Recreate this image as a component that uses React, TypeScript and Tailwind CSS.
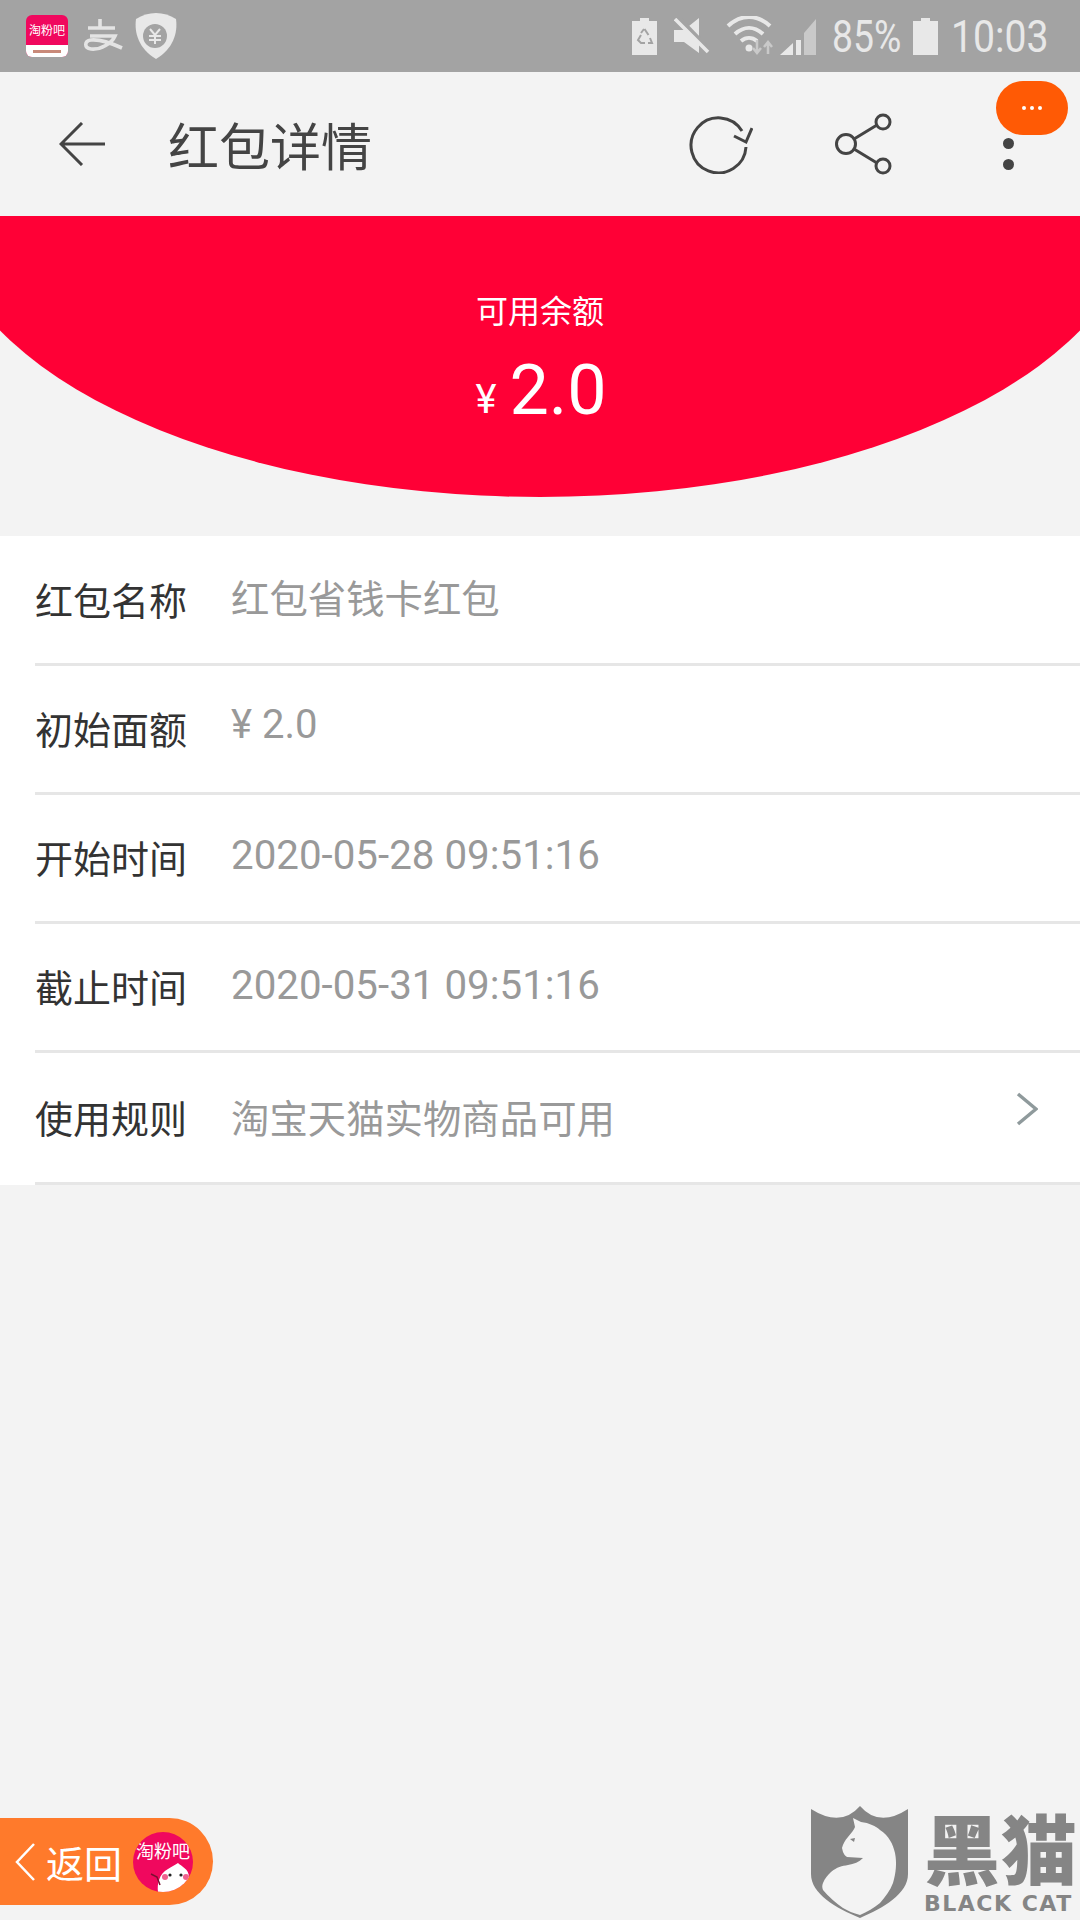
const CJK = "font-['Noto_Sans_CJK_SC','Noto_Sans',sans-serif]";

function StatusBar() {
  return (
    <div className="relative flex h-[72px] items-center justify-between bg-[#a3a3a3] pl-[26px] pr-[33px] text-[#e8e8e8]">
      <div className="flex items-center">
        <div className="flex h-[42px] w-[42px] flex-col overflow-hidden rounded-[6px] bg-[#f0085e]">
          <div className={`flex h-[30px] items-center justify-center whitespace-nowrap text-[12px] leading-none text-white ${CJK}`}>淘粉吧</div>
          <div className="flex h-[12px] items-center justify-center bg-white">
            <div className="h-[3px] w-[28px] bg-[#c98a7a]" />
          </div>
        </div>
        <svg className="ml-[15px]" width="41" height="34" viewBox="0 0 41 34" fill="none" stroke="#e4e4e4" strokeWidth="3.6">
          <path d="M17 0v9M5 9h27M7 17h25C29 24 18 31 8 30 1 29 1 22 8 21c9-1 20 3 31 8" />
        </svg>
        <svg className="ml-[10px]" width="44" height="46" viewBox="0 0 44 46">
          <path d="M22 0c7 0 14 2 20 6 2 14-3 30-20 40C5 36 0 20 2 6 8 2 15 0 22 0z" fill="#e8e8e8" />
          <circle cx="21" cy="23" r="12" fill="#a3a3a3" />
          <path d="M16 16l5 6 5-6M15 23h12M15 27h12M21 22v9" fill="none" stroke="#e8e8e8" strokeWidth="2" />
        </svg>
      </div>
      <div className="flex items-center">
        <svg width="25" height="37" viewBox="0 0 25 37">
          <path d="M8 0h9v3h8v34H0V3h8z" fill="#e8e8e8" />
          <path d="M12.5 11l4 6M9 17l-3 5 3 3h4M16 25h4l-2-5M12 11l-3 4" fill="none" stroke="#a3a3a3" strokeWidth="2" />
        </svg>
        <svg className="ml-[17px]" width="36" height="36" viewBox="0 0 36 36">
          <path d="M0 12h10L25 0v35L10 24H0z" fill="#e8e8e8" />
          <path d="M5 0l31 32" stroke="#a3a3a3" strokeWidth="4" />
          <path d="M1 1l33 33" stroke="#e8e8e8" strokeWidth="3.5" />
        </svg>
        <svg className="ml-[16px]" width="92" height="40" viewBox="0 0 92 40">
          <path d="M2 10c13-12 29-12 42 0M9 18c9-8 19-8 28 0M15 25c5-4 11-4 16 0" fill="none" stroke="#e8e8e8" strokeWidth="4" />
          <circle cx="23" cy="32" r="3.5" fill="#e8e8e8" />
          <path d="M31 24v12M27 32l4 5 4-5" fill="none" stroke="#c9c9c9" strokeWidth="2.5" />
          <path d="M42 38V27M38 31l4-5 4 5" fill="none" stroke="#c9c9c9" strokeWidth="2.5" />
          <path d="M54 39l13-12v12z" fill="#e8e8e8" />
          <path d="M70 24h5v15h-5z" fill="#e8e8e8" />
          <path d="M78 17l12-14v36H78z" fill="#c9c9c9" />
        </svg>
        <span className="ml-[14px] w-[82px] origin-left scale-x-[0.83] whitespace-nowrap text-[45px] leading-none font-['Roboto',sans-serif]">85%</span>
        <svg className="ml-[-1px]" width="25" height="37" viewBox="0 0 25 37">
          <path d="M8 0h9v3h8v34H0V3h8z" fill="#e8e8e8" />
        </svg>
        <span className="ml-[13px] w-[96px] origin-left scale-x-[0.87] whitespace-nowrap text-[45px] leading-none font-['Roboto',sans-serif]">10:03</span>
      </div>
    </div>
  );
}

function Header() {
  return (
    <div className="relative flex h-[144px] items-center bg-[#f3f3f3] pl-[59px] text-[#444444]">
      <svg width="46" height="44" viewBox="0 0 46 44" fill="none" stroke="#444444" strokeWidth="3">
        <path d="M23 1L2 22l21 21M2 22h44" />
      </svg>
      <span className={`ml-[63px] text-[51px] leading-none ${CJK}`}>红包详情</span>
      <svg className="ml-[317px]" width="64" height="60" viewBox="0 0 64 60" fill="none" stroke="#444444" strokeWidth="3">
        <path d="M57 33A27.5 27.5 0 1 1 53 17" />
        <path d="M45 22l12 6 6-14" />
      </svg>
      <svg className="ml-[81px]" width="60" height="62" viewBox="0 0 60 62" fill="none" stroke="#444444" strokeWidth="3">
        <circle cx="12" cy="31" r="9.5" />
        <circle cx="49" cy="9" r="7" />
        <circle cx="49" cy="53" r="7" />
        <path d="M20 26l23-14M20 36l23 14" />
      </svg>
      <div className="ml-[109px] flex flex-col gap-[10px] pt-[20px]">
        <span className="h-[11px] w-[11px] rounded-full bg-[#444444]" />
        <span className="h-[11px] w-[11px] rounded-full bg-[#444444]" />
      </div>
      <div className="absolute left-[996px] top-[9px] flex h-[54px] w-[72px] items-center justify-center gap-[4px] rounded-[27px] bg-[#ff5a05]">
        <span className="h-[4px] w-[4px] rounded-full bg-white" />
        <span className="h-[4px] w-[4px] rounded-full bg-white" />
        <span className="h-[4px] w-[4px] rounded-full bg-white" />
      </div>
    </div>
  );
}

function Balance() {
  return (
    <div className="relative h-[320px] overflow-hidden bg-[#f3f3f3]">
      <div className="mx-[-60px] mt-[-309px] flex h-[590px] flex-col items-center rounded-[50%] bg-[#ff0036] pt-[384px] text-white">
        <span className={`text-[32px] leading-[36px] ${CJK}`}>可用余额</span>
        <div className="ml-[2px] mt-[28px] flex items-end font-['Roboto',sans-serif]">
          <span className="mr-[13px] mb-[5px] text-[40px] leading-none">¥</span>
          <span className="text-[70px] leading-[70px]">2.0</span>
        </div>
      </div>
    </div>
  );
}

const rows = [
  { label: "红包名称", value: "红包省钱卡红包", h: "h-[130px]", shift: "text-[38.4px] pt-[2px]" },
  { label: "初始面额", value: "¥ 2.0", h: "h-[129px]", shift: "text-[40px] pb-[8px]" },
  { label: "开始时间", value: "2020-05-28 09:51:16", h: "h-[129px]", shift: "text-[40.3px] pb-[4px]" },
  { label: "截止时间", value: "2020-05-31 09:51:16", h: "h-[129px]", shift: "text-[40.3px] pb-[2px]" },
];

function Row({ label, value, h, shift, chevron }: { label: string; value: string; h: string; shift: string; chevron?: boolean }) {
  return (
    <div className={`flex ${h} items-center border-b-[3px] border-[#e6e6e6]`}>
      <span className={`w-[196px] shrink-0 pb-[2px] text-[38px] leading-none text-[#333333] ${CJK}`}>{label}</span>
      <span className={`leading-none text-[#999999] font-['Roboto','Noto_Sans_CJK_SC',sans-serif] ${shift}`}>{value}</span>
      {chevron && (
        <svg className="ml-auto mr-[42px] mb-[18px]" width="22" height="34" viewBox="0 0 22 34" fill="none" stroke="#8f9a9c" strokeWidth="3.5">
          <path d="M2 2l18 15L2 32" />
        </svg>
      )}
    </div>
  );
}

function Details() {
  return (
    <div className="bg-white pl-[35px]">
      {rows.map((r) => (
        <Row key={r.label} {...r} />
      ))}
      <Row label="使用规则" value="淘宝天猫实物商品可用" h="h-[132px]" shift="text-[38.4px] pt-[6px]" chevron />
    </div>
  );
}

function BackPill() {
  return (
    <div className="absolute bottom-[15px] left-0 flex h-[87px] w-[213px] items-center rounded-r-[44px] bg-[#ff7a2b] pl-[15px] text-white">
      <svg width="20" height="38" viewBox="0 0 20 38" fill="none" stroke="#ffffff" strokeWidth="2.5">
        <path d="M19 1L2 19l17 18" />
      </svg>
      <span className={`ml-[11px] text-[38px] leading-none ${CJK}`}>返回</span>
      <div className="relative ml-[11px] h-[60px] w-[60px] overflow-hidden rounded-full bg-[#f0085e]">
        <span className={`absolute left-0 top-[9px] w-full whitespace-nowrap text-center text-[18px] leading-none text-white ${CJK}`}>淘粉吧</span>
        <svg className="absolute left-0 top-0" width="60" height="60" viewBox="0 0 60 60">
          <path d="M25 60c-1-8 1-18 10-23 3-2 7-4 10-6 3 3 11 6 11 14 0 6-4 12-9 15z" fill="#ffffff" />
          <circle cx="37" cy="43" r="1.6" fill="#222222" />
          <circle cx="48" cy="43" r="1.6" fill="#222222" />
          <circle cx="32" cy="45" r="3" fill="#f0608e" />
          <circle cx="53" cy="45" r="3" fill="#f0608e" />
          <path d="M18 42l6 3 3 8" fill="none" stroke="#7a1030" strokeWidth="1.5" />
        </svg>
      </div>
    </div>
  );
}

function Watermark() {
  return (
    <div className="absolute bottom-[2px] left-[811px] flex h-[112px] w-[269px] items-start text-[#858585]">
      <svg width="97" height="112" viewBox="0 0 97 112">
        <path d="M0 3Q30 22 49 0 68 22 97 3V68C97 88 72 102 49 112 25 102 0 88 0 68z" fill="#858585" />
        <path d="M42 12l8 4c8 1 15 4 19 8 9 6 13 14 15 23 2 10 1 20-2 30-3 8-8 14-13 20-6 5-13 9-20 12-7-2-12-4-17-7-7-5-15-12-20-18-1-2-1-5 0-7 2-5 5-8 8-11 6-5 11-6 17-7 6-1 11-3 15-7l-16-1c-2-1-3-3-4-5l-1-4c1-4 3-8 6-11 3-4 6-7 7-10z" fill="#f3f3f3" />
        <path d="M39 33l5-1-1 4z" fill="#858585" />
      </svg>
      <div className="ml-[16px] flex flex-col">
        <span className={`mt-[2px] h-[76px] whitespace-nowrap text-[76px] font-black leading-[76px] tracking-[1px] ${CJK}`}>黑猫</span>
        <span className="mt-[9px] whitespace-nowrap text-[22px] font-bold leading-[22px] tracking-[1.5px] font-['DejaVu_Sans',sans-serif]">BLACK CAT</span>
      </div>
    </div>
  );
}

export default function App() {
  return (
    <div className="relative h-[1920px] w-[1080px] overflow-hidden bg-[#f3f3f3]">
      <StatusBar />
      <Header />
      <Balance />
      <Details />
      <BackPill />
      <Watermark />
    </div>
  );
}
